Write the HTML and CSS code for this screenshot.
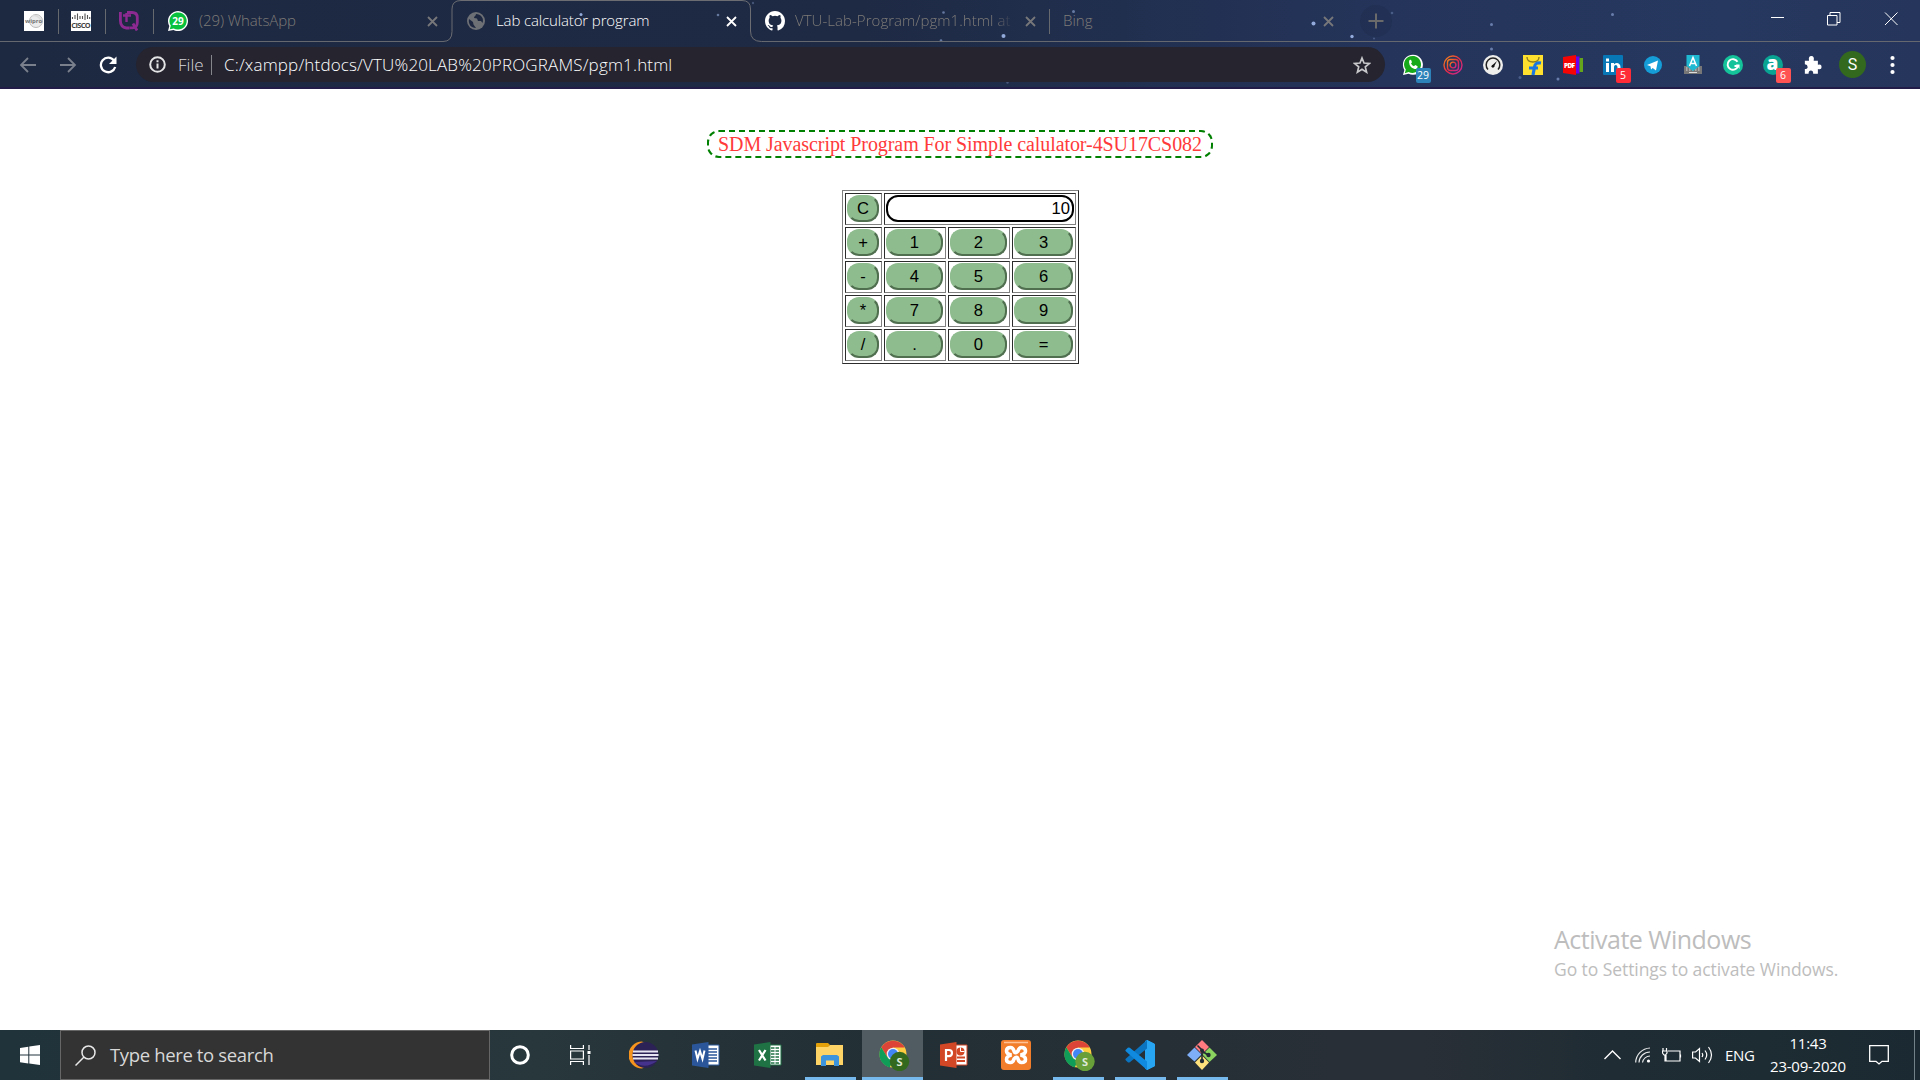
FILE: index.html
```html
<!DOCTYPE html>
<html lang="en">
<head>
<meta charset="utf-8">
<title>Lab calculator program</title>
<link rel="stylesheet" href="styles.css">
</head>
<body>
<div class="screen">
<header class="browser">
  <svg class="stars" width="1920" height="87" fill="#9fb8ea">
    <g opacity=".9"><circle cx="581" cy="14.500" r="1.500"/><circle cx="1003.500" cy="36" r="2"/><circle cx="1313.500" cy="23.500" r="2"/><circle cx="1352" cy="36.500" r="1.700"/></g>
    <g opacity=".55"><circle cx="718" cy="15" r="1.300"/><circle cx="943.500" cy="12.500" r="1.300"/><circle cx="941" cy="40.500" r="1.300"/><circle cx="1073.500" cy="11.500" r="1.500"/><circle cx="1491.500" cy="24.500" r="1.500"/><circle cx="1612.500" cy="14.500" r="1.500"/><circle cx="1491.500" cy="49" r="1.500"/><circle cx="1558" cy="79" r="1.500"/></g>
    <g opacity=".3"><circle cx="753" cy="3" r="1.200"/><circle cx="1392" cy="13" r="1.300"/><circle cx="1374" cy="38.500" r="1"/><circle cx="1520" cy="77.500" r="1.500"/><circle cx="1007.500" cy="82.500" r="1.200"/></g>
  </svg>

  <div class="tabs">
    <div class="tabs-left">
      <svg class="fav" viewBox="0 0 20 20"><rect width="20" height="20" fill="#fff"/><circle cx="12" cy="10" r="6.500" fill="#ececec" stroke="#bbb"/><path d="M8 5a7 7 0 0 1 9 8" fill="none" stroke="#ddd" stroke-width="1.500"/><text x="1" y="12" font-size="6" font-weight="700" fill="#777" font-family="Open Sans">wipro</text></svg>
      <i class="sep"></i>
      <svg class="fav" viewBox="0 0 20 20"><rect width="20" height="20" fill="#fff"/><path d="M1.500 6v2M4 4v4M6.500 2.500v6.500M9 5v3M11.500 5v3M14 2.500v6.500M16.500 4v4M18.700 6v2" stroke="#555" stroke-width="1.100"/><text x=".3" y="17" font-size="7.500" textLength="19.500" font-weight="700" fill="#444" font-family="Open Sans">CISCO</text></svg>
      <i class="sep"></i>
      <svg class="fav tq" viewBox="0 0 20 20" fill="none" stroke="#8d2a92" stroke-width="2.800"><path d="M1.400 1v8.500q0 6.500 6 7.500h3"/><path d="M8 1.500h5q5.300 0 5.300 5v5q0 5-4.800 5.300h-3"/><path d="M14 12.500l4 7"/><path d="M4 4.500h8M7.500 2v9" stroke-width="2.400"/></svg>
      <i class="sep"></i>
      <svg class="fav wa" viewBox="0 0 20 20"><path d="M0 20l1.300-5A10 10 0 1 1 5.500 19z" fill="#fff"/><path d="M1.800 18.300l1-3.700A8.600 8.600 0 1 1 5.700 17.400z" fill="#09c13d"/><text x="10" y="13.800" font-size="10" font-weight="700" fill="#fff" text-anchor="middle" font-family="Open Sans">29</text></svg>
      <span class="tab-title t-wa">(29) WhatsApp</span>
      <svg class="x" viewBox="0 0 11 11"><path d="M1 1l9 9M10 1l-9 9"/></svg>
    </div>
    <div class="tab-active">
      <svg class="outline" width="320" height="42" fill="none" stroke="#6b6d72"><path d="M0 41.500q9 0 9-10V9q0-8.500 9-8.500h281q8.500 0 8.500 8.500v22q0 10.500 11 10.500h2"/></svg>
      <svg class="globe" viewBox="0 0 18 18"><circle cx="9" cy="9" r="9" fill="#6d7075"/><path d="M2 7l4 3 .500 2.500L9 16c-5 0-8-4-7-9zM9 2c0 2-2 2-2 4l3 .500 1 2.500h3l1.500 2c2-5-2-9-6.500-9z" fill="#1e2941"/></svg>
      <span class="tab-title t-lab">Lab calculator program</span>
      <svg class="x bright" viewBox="0 0 11 11"><path d="M1 1l9 9M10 1l-9 9"/></svg>
    </div>
    <div class="tabs-right">
      <svg class="fav gh" viewBox="0 0 16 16"><path fill="#fff" d="M8 0C3.580 0 0 3.580 0 8c0 3.540 2.290 6.530 5.470 7.590.4.070.55-.17.55-.38v-1.490c-2.010.37-2.530-.49-2.690-.94-.09-.23-.48-.94-.82-1.130-.28-.15-.68-.52-.01-.53.63-.01 1.080.58 1.230.82.72 1.210 1.870.87 2.330.66.070-.52.28-.87.51-1.070-1.780-.2-3.640-.89-3.640-3.950 0-.87.31-1.590.82-2.150-.08-.2-.36-1.020.08-2.120 0 0 .67-.21 2.200.82a7.600 7.600 0 0 1 4 0c1.530-1.040 2.200-.82 2.200-.82.44 1.100.16 1.920.08 2.120.51.560.82 1.270.82 2.150 0 3.070-1.870 3.750-3.650 3.950.29.25.54.73.54 1.480v2.200c0 .21.150.46.55.38A8 8 0 0 0 16 8c0-4.420-3.580-8-8-8z"/></svg>
      <span class="tab-title t-vtu">VTU-Lab-Program/pgm1.html at</span>
      <svg class="x" viewBox="0 0 11 11"><path d="M1 1l9 9M10 1l-9 9"/></svg>
      <i class="sep"></i>
      <span class="tab-title t-bing">Bing</span>
      <svg class="x" viewBox="0 0 11 11"><path d="M1 1l9 9M10 1l-9 9"/></svg>
      <span class="newtab"><svg width="16" height="16" stroke="#6a6a6a" stroke-width="2"><path d="M8 .500v15M.500 8h15"/></svg></span>
      <svg class="winctl" width="130" height="14" fill="none" stroke="#fff"><path d="M0 5.500h13"/><path d="M56.500 3.500h9.500v9.500h-9.500zM59 3.500V.500h10v10h-3"/><path d="M114 .500l12.500 12.500M126.500 .500L114 13"/></svg>
    </div>
  </div>

  <div class="toolbar">
    <div class="nav">
      <svg width="18" height="18" fill="none" stroke="#7a808c" stroke-width="1.800"><path d="M17 9H2M9 2L2 9l7 7"/></svg>
      <svg width="18" height="18" fill="none" stroke="#7a808c" stroke-width="1.800"><path d="M1 9h15M9 2l7 7-7 7"/></svg>
      <svg width="18" height="18" fill="none" stroke="#fff" stroke-width="2.300"><path d="M15 4.500A7.300 7.300 0 1 0 16.200 11"/><path d="M17.500 .500V8H10z" fill="#fff" stroke="none"/></svg>
    </div>
    <div class="omnibox">
      <svg width="17" height="17" fill="none" stroke="#e4e4e6" stroke-width="2"><circle cx="8.500" cy="8.500" r="7.300"/><path d="M8.500 7.500v5M8.500 4.200v2"/></svg>
      <span class="file">File</span><i class="bar"></i><span class="url">C:/xampp/htdocs/VTU%20LAB%20PROGRAMS/pgm1.html</span>
      <svg class="star" width="18" height="18" fill="none" stroke="#c8c8cb" stroke-width="1.700"><path d="M9 2l2 5 5.400.400-4.100 3.500 1.300 5.300L9 13.300l-4.600 2.900 1.300-5.300L1.600 7.400 7 7z"/></svg>
    </div>
    <div class="exts">
      <span class="ext"><svg viewBox="0 0 20 20"><path d="M0 20l1.400-5A10 10 0 1 1 5.500 18.700z" fill="#fff"/><path d="M1.800 18.200l1-3.600A8.500 8.500 0 1 1 5.700 17z" fill="#18a91b"/><path d="M6.500 5l1.500-.200 1 2.500-1 1.200q1 2 3 2.800l1.200-1.200 2.400 1.100q0 3-3 2.800Q6.500 12.500 6 7z" fill="#fff"/></svg><b class="badge blue">29</b></span>
      <span class="ext"><svg viewBox="0 0 20 20" fill="none" stroke-width="1.400"><defs><linearGradient id="ig" x2="1" y2="1"><stop stop-color="#f58a15"/><stop offset=".5" stop-color="#e32b48"/><stop offset="1" stop-color="#c4269a"/></linearGradient></defs><g stroke="url(#ig)"><circle cx="10" cy="10" r="9"/><rect x="4.500" y="4.500" width="11" height="11" rx="3"/><circle cx="10" cy="10" r="2.900"/></g></svg></span>
      <span class="ext"><svg viewBox="0 0 20 20"><circle cx="10" cy="10" r="10" fill="#eeeeec"/><path d="M5 14.500A6.800 6.800 0 1 1 15 14.500" fill="none" stroke="#222" stroke-width="1.500"/><path d="M14 6l-3.200 6-1.900-1.500z" fill="#111"/><circle cx="9.900" cy="11.300" r="1.400" fill="#111"/></svg></span>
      <span class="ext"><svg viewBox="0 0 20 20"><rect width="20" height="20" fill="#ffe02f"/><path d="M4 2q0 5 6 5t6-5" fill="none" stroke="#8c7b20" stroke-width="1.300"/><path d="M18 8q-6-1-6.500 4L10 20M6 13h9" fill="none" stroke="#1976e0" stroke-width="3.200"/></svg></span>
      <span class="ext"><svg viewBox="0 0 20 20"><path d="M0 2l13-2v20L0 18z" fill="#f60505"/><rect x="13" y="1.500" width="3.500" height="17" fill="#6900f0"/><rect x="16.500" y="3" width="3.500" height="14" fill="#65a51b"/><text x="1" y="12.500" font-size="6.500" textLength="11" font-weight="800" fill="#fff" font-family="Open Sans">PDF</text></svg></span>
      <span class="ext"><svg viewBox="0 0 20 20"><rect width="20" height="20" rx="1" fill="#0877b5"/><path d="M3 8h3v9H3zM3 3.500h3v3H3zM8 8h3v1.300q3-2.500 5.500 0 1 1 1 3V17h-3v-5q-.200-2-1.800-2T11 12v5H8z" fill="#fff"/></svg><b class="badge red">5</b></span>
      <span class="ext"><svg viewBox="0 0 20 20"><circle cx="10" cy="10" r="9" fill="#159dd8"/><path d="M4 10l11-4.500-2 10-3.300-2.600L8 14.500l-.500-3.300z" fill="#fff"/></svg></span>
      <span class="ext"><svg viewBox="0 0 20 20"><path d="M1 11h18v8H1z" fill="#777"/><path d="M3 13h14M3 15h14" stroke="#ddd" stroke-dasharray="1.500 1.500"/><path d="M6 17.500h8" stroke="#ddd"/><path d="M3.500 0h13v11L10 16l-6.500-5z" fill="#1fb9d2"/><path d="M6.500 11L10 2.500l3.500 8.500M8 8.500h4" fill="none" stroke="#fff" stroke-width="1.500"/></svg></span>
      <span class="ext"><svg viewBox="0 0 20 20"><circle cx="10" cy="10" r="10" fill="#15c39a"/><path d="M14.500 6.800A5.300 5.300 0 1 0 15 11h-3.500" fill="none" stroke="#fff" stroke-width="1.900"/><path d="M13 9.500h3.500V14z" fill="#fff"/></svg></span>
      <span class="ext"><svg viewBox="0 0 20 20"><circle cx="10" cy="10" r="10" fill="#0aa493"/><text x="9.500" y="15" font-size="19" font-weight="800" text-anchor="middle" fill="#fff" font-family="Open Sans">a</text></svg><b class="badge pink">6</b></span>
      <span class="ext"><svg viewBox="0 0 20 20"><path d="M2 5h4.500Q5.500 0 9 0t2.500 5H16v4.500q4-1 4 2.300t-4 2.300V19h-5q0-3.500-2.500-3.500T6 19H2v-5q3 0 3-2.300T2 9z" fill="#fff" transform="translate(0 1) scale(.93)"/></svg></span>
    </div>
    <span class="avatar">S</span>
    <svg class="dots" width="5" height="20" fill="#fff"><circle cx="2.500" cy="3" r="2.100"/><circle cx="2.500" cy="10" r="2.100"/><circle cx="2.500" cy="17" r="2.100"/></svg>
  </div>
</header>

<main class="page">
  <h1 class="heading">SDM Javascript Program For Simple calulator-4SU17CS082</h1>
  <table class="calc">
    <colgroup><col class="c-op"><col class="c-num"><col class="c-num"><col class="c-last"></colgroup>
    <tr><td><button>C</button></td><td colspan="3"><div class="display">10</div></td></tr>
    <tr><td><button>+</button></td><td><button>1</button></td><td><button>2</button></td><td><button>3</button></td></tr>
    <tr><td><button>-</button></td><td><button>4</button></td><td><button>5</button></td><td><button>6</button></td></tr>
    <tr><td><button>*</button></td><td><button>7</button></td><td><button>8</button></td><td><button>9</button></td></tr>
    <tr><td><button>/</button></td><td><button>.</button></td><td><button>0</button></td><td><button>=</button></td></tr>
  </table>
  <div class="activate"><p class="act-title">Activate Windows</p><p class="act-sub">Go to Settings to activate Windows.</p></div>
</main>

<footer class="taskbar">
  <span class="start"><svg width="20" height="20" fill="#fff"><path d="M0 3l8.300-1.200V9.500H0zM9.300 1.600L20 0v9.500H9.300zM0 10.500h8.300v8L0 17.300zM9.300 10.500H20V20L9.300 18.600z"/></svg></span>
  <div class="search"><svg width="21" height="21" fill="none" stroke="#e8e8e8" stroke-width="1.500"><circle cx="13.500" cy="7.500" r="6.500"/><path d="M9 12L.500 20.500"/></svg><span>Type here to search</span></div>
  <span class="task sys"><svg width="20" height="20" fill="none" stroke="#fff" stroke-width="3"><circle cx="10" cy="10" r="8.300"/></svg></span>
  <span class="task sys view"><svg width="21" height="20" fill="none" stroke="#fff" stroke-width="1.200"><path d="M.600 0v3.500h12.800V0M.600 20v-3.500h12.800V20M.600 6h12.800v8H.600zM19 0v5M19 10v10"/><path d="M17.500 6h3v3h-3z" fill="#fff" stroke="none"/></svg></span>
  <span class="task"><svg width="30" height="30"><path d="M13 1.500A13.500 13.500 0 0 0 13 28.500L16 27A13 13 0 0 1 16 3z" fill="#f7941e"/><circle cx="16.500" cy="15" r="13" fill="#2c2255"/><path d="M5 22Q16 30 28 21z" fill="#45328c"/><path d="M4 11.500h25M3.500 15h26M4 18.500h25" stroke="#e9e6f3" stroke-width="1.800"/></svg></span>
  <span class="task"><svg width="28" height="28"><path d="M14 4h13v20H14z" fill="#fff" stroke="#2b579a"/><path d="M16 8h9M16 11h9M16 14h9M16 17h9M16 20h9" stroke="#2b579a" stroke-width="1.500"/><path d="M0 3.500L16.500 1v26L0 24.500z" fill="#2b579a"/><path d="M3.500 9.500L5.500 18 8 10l2.500 8 2-8.500" fill="none" stroke="#fff" stroke-width="2"/></svg></span>
  <span class="task"><svg width="28" height="28"><path d="M14 4h13v20H14z" fill="#fff" stroke="#217346"/><path d="M17 7h8M17 10h8M17 13h8M17 16h8M17 19h8M17 22h8" stroke="#217346" stroke-width="1.700" stroke-dasharray="3.500 1"/><path d="M0 3.500L16.500 1v26L0 24.500z" fill="#1e7244"/><path d="M5 9l6.500 10.500M11.500 9L5 19.500" fill="none" stroke="#fff" stroke-width="2.200"/></svg></span>
  <span class="task open"><svg width="28" height="28"><path d="M0 3q0-1 1-1h11l2 2-2 3H0z" fill="#e3a008"/><path d="M0 6h12l2-2h13v20H0z" fill="#ffd466"/><path d="M5 25V15.500l2-1.500h14l2 1.500V25h-5v-5.500H10V25z" fill="#3b94dc"/></svg></span>
  <span class="task open active"><svg width="32" height="32"><use href="#chrome"/><circle cx="21.500" cy="22.500" r="9.700" fill="#33691e"/><text class="mini" x="21.500" y="26.500">S</text></svg></span>
  <span class="task"><svg width="28" height="28"><path d="M14 4h13v20H14z" fill="#fff" stroke="#d24726"/><path d="M17 16.500h8M17 20h8" stroke="#d24726" stroke-width="1.800"/><circle cx="20.500" cy="10.500" r="4" fill="#d24726"/><path d="M20.500 10.500V6.500M20.500 10.500h4" stroke="#fff"/><path d="M0 3.500L16.500 1v26L0 24.500z" fill="#d24726"/><path d="M6 20V9h3q3 0 3 3t-3 3.200H6" fill="none" stroke="#fff" stroke-width="2.200"/></svg></span>
  <span class="task"><svg width="30" height="30"><rect width="30" height="30" rx="3" fill="#f27e2c"/><path d="M3 2.500h24" stroke="#ffc294" stroke-width="1.500"/><path d="M10.500 15Q5.500 14 5.500 11q0-3.500 4-3.500Q12 7.500 13 11t4 0q1-3.500 3.500-3.500 4 0 4 3.500 0 3-5 4 5 1 5 4.500 0 3-4 3-2.500 0-3.500-3.500t-4 0q-1 3.500-3.500 3.500-4 0-4-3Q5.500 16 10.500 15z" fill="none" stroke="#fff" stroke-width="3.600"/></svg></span>
  <span class="task open profile"><svg width="32" height="32"><defs><g id="chrome"><circle cx="15" cy="15" r="13.500" fill="#ffcd40"/><path d="M3.300 8.300A13.500 13.500 0 0 1 26.700 8.500H15l-5.600 9.700z" fill="#db4437"/><path d="M3.300 8.300L9.400 18.200l5.600 3-3.300 7.200A13.500 13.500 0 0 1 3.300 8.300z" fill="#0f9d58"/><circle cx="15" cy="15" r="6.300" fill="#f1f1f1"/><circle cx="15" cy="15" r="5" fill="#4285f4"/></g></defs><use href="#chrome"/><circle cx="22" cy="22.500" r="9.700" fill="#689f38"/><text class="mini" x="22" y="26.500">S</text></svg></span>
  <span class="task open"><svg width="30" height="30"><path d="M22 0l7 3.500q1 .500 1 1.500v20q0 1-1 1.500L22 30l-2-1.500V1z" fill="#27a5f2"/><path d="M22 0L1 18.500q-1.200 1 0 2l1.800 1.700q1 .700 2 0L22 8.500z" fill="#0a74c0"/><path d="M22 30L1 11.500q-1.200-1 0-2l1.800-1.700q1-.700 2 0L22 21.500z" fill="#0f8ade"/><path d="M22 0l7 3.500q1 .500 1 1.500v20q0 1-1 1.500L22 30z" fill="#27a5f2"/></svg></span>
  <span class="task open"><svg width="30" height="30"><path d="M15 0l7 7-7 7-7-7z" fill="#ff7b80"/><path d="M7.500 7.500l7 7-7 7L0 15z" fill="#7eaef8"/><path d="M22.500 7.500L30 15l-7.500 7-7-7.500z" fill="#8bd45f"/><path d="M15 15.500l7 7-7 7.500-7-7.500z" fill="#ffe27c"/><path d="M10.500 5.500l4.500 4.500v12M15 11l6 4" fill="none" stroke="#222b33" stroke-width="1.600"/><circle cx="15" cy="10.500" r="2" fill="#222b33"/><circle cx="15" cy="21" r="2.200" fill="#222b33"/><circle cx="21.500" cy="15" r="2.200" fill="#222b33"/></svg></span>
  <div class="tray">
    <svg width="17" height="10" fill="none" stroke="#fff" stroke-width="1.400"><path d="M.500 9L8.500 1l8 8"/></svg>
    <svg class="wifi" width="16" height="16" fill="none" stroke="#e6e8e9" stroke-width="1.200"><path d="M.700 15.500A15 15 0 0 1 15 1M4 15.500A11 11 0 0 1 15 5M7.500 15.500A8 8 0 0 1 15 9"/><circle cx="13.500" cy="14" r="1.600" fill="#fff" stroke="none"/></svg>
    <svg class="batt" width="20" height="15" fill="none" stroke="#fff" stroke-width="1.200"><path d="M6 3h12v10H4V7M18.500 6.500v3M1 0v3M4.500 0v3M.500 3h4.500v2L3.500 7H2L.500 5zM3 7v6h2"/></svg>
    <svg class="sound" width="21" height="18" fill="none" stroke="#fff" stroke-width="1.200"><path d="M.600 6h3L7.500 2.500v13L3.500 12H.600zM10 7q1.500 2 0 4M13 4.500q3.500 4.500 0 9M16.500 1q6 8 0 16"/></svg>
    <span class="eng">ENG</span>
    <div class="clock"><span class="time">11:43</span><span class="date">23-09-2020</span></div>
    <svg class="note" width="20" height="20" fill="none" stroke="#fff" stroke-width="1.300"><path d="M.700.700h18.600v15.600H13L10 19l-3-2.700H.700z"/></svg>
    <i class="peek"></i>
  </div>
</footer>
</div>
</body>
</html>
```
FILE: styles.css
```css
* { box-sizing: border-box; }
body { margin: 0; background: #fff; font-family: "Open Sans", "Noto Sans", sans-serif; }
svg { display: block; flex: none; }
.screen { width: 1920px; height: 1080px; display: flex; flex-direction: column; overflow: hidden; }

/* Browser frame */
.browser { position: relative; height: 89px; flex: none; background: linear-gradient(90deg, #1d2841 0%, #1e2a44 45%, #24345a 72%, #273860 90%, #25355b 100%); border-bottom: 2px solid #211d48; }
.stars { position: absolute; left: 0; top: 0; }
.tabs { position: relative; display: flex; height: 42px; }
.tabs-left, .tabs-right { display: flex; align-items: center; border-bottom: 1px solid #65686e; padding-top: 1px; }
.tabs-left { width: 443px; padding-left: 24px; }
.tabs-right { flex: 1; padding-left: 3px; }
.fav { width: 20px; height: 20px; }
.sep { flex: none; width: 1px; height: 25px; background: #66696e; margin: 0 12px 0 14px; }
.tq { margin-left: 1px; }
.wa { margin-left: 2px; }
.tab-title { font-size: 15px; font-weight: 300; line-height: 20px; margin-bottom: 2px; white-space: nowrap; color: #7f7c78; overflow: hidden; }
.x { width: 11px; height: 11px; fill: none; stroke: #77777a; stroke-width: 1.8; }
.x.bright { stroke: #fff; }
.t-wa { width: 228px; margin-left: 11px; letter-spacing: -0.1px; }
.tab-active { position: relative; display: flex; align-items: center; width: 319px; padding-left: 24px; }
.outline { position: absolute; left: 0; top: 0; }
.globe { width: 18px; height: 18px; }
.t-lab { width: 230px; margin-left: 11px; color: #fff; letter-spacing: -0.13px; }
.t-vtu { width: 219px; margin-right: 11px; margin-left: 10px; letter-spacing: 0.04px; -webkit-mask-image: linear-gradient(90deg, #000 91%, transparent); mask-image: linear-gradient(90deg, #000 91%, transparent); }
.tabs-right .sep { margin: 0 13px 0 13px; }
.t-bing { width: 260px; }
.newtab { display: flex; align-items: center; justify-content: center; width: 32px; height: 32px; margin-left: 26px; border-radius: 50%; background: rgba(20, 28, 50, .14); }
.winctl { margin-left: 379px; margin-bottom: 4px; }

.toolbar { position: relative; display: flex; align-items: center; height: 45px; }
.nav { display: flex; gap: 22px; width: 136px; padding-left: 19px; }
.omnibox { display: flex; align-items: center; width: 1249px; height: 35px; border-radius: 18px; background: #25242f; padding-left: 13px; font-size: 17px; font-weight: 300; line-height: 24px; color: #fff; white-space: nowrap; }
.file { width: 33px; margin-left: 12px; color: #d8d8dc; }
.bar { width: 1px; height: 20px; background: #85858c; }
.url { flex: 1; margin-left: 12px; letter-spacing: 0.16px; }
.star { margin-right: 14px; }
.exts { display: flex; gap: 20px; margin-left: 17.500px; }
.ext { position: relative; width: 20px; height: 20px; }
.ext > svg { width: 20px; height: 20px; overflow: visible; }
.badge { position: absolute; left: 13px; top: 13px; min-width: 15px; height: 15px; border-radius: 2px; font-size: 10.500px; font-weight: 400; line-height: 15px; text-align: center; color: #fff; }
.blue { background: #2d83b9; }
.red { background: #ff2c37; }
.pink { background: #ff5252; }
.avatar { width: 27px; height: 27px; margin-left: 16.500px; border-radius: 50%; background: #33691e; color: #fff; font: 400 16px/27px Roboto, sans-serif; text-align: center; }
.dots { margin-left: 24px; }

/* Calculator page */
.page { position: relative; flex: 1; display: flex; flex-direction: column; align-items: center; padding-top: 41px; }
.heading { margin: 0; width: 506px; height: 28px; border: 2px dashed green; border-radius: 12px; font: 400 20px/24px "Liberation Serif", serif; letter-spacing: -0.075px; color: #ff3a3a; text-align: center; white-space: nowrap; }
.calc { margin-top: 32px; margin-left: 1px; width: 237px; table-layout: fixed; border-collapse: separate; border-spacing: 2px; border: 1px solid; border-color: #808080 #2c2c2c #2c2c2c #808080; }
.c-op { width: 37px; }
.c-num { width: 62px; }
.c-last { width: 64px; }
.calc td { height: 32px; padding: 1px; border: 1px solid; border-color: #2c2c2c #808080 #808080 #2c2c2c; vertical-align: top; }
.calc button { display: block; width: calc(100% - 1px); height: 27px; padding: 0; border: 2px solid; border-color: #8fbc8f #4f6f4f #4f6f4f #8fbc8f; border-radius: 12px; background: #8fbc8f; color: #000; font: 16.600px/23px "Liberation Sans", Arial, sans-serif; }
.display { width: 188px; height: 27px; border: 2px solid #000; border-radius: 12px; padding-right: 2px; font: 16.600px/23px "Liberation Sans", Arial, sans-serif; text-align: right; }
.activate { position: absolute; left: 1554px; top: 832px; color: #bdbdbd; white-space: nowrap; }
.activate p { margin: 0; }
.act-title { font-size: 25px; line-height: 36px; letter-spacing: -0.5px; }
.act-sub { font-size: 17.500px; line-height: 24px; letter-spacing: -0.07px; }

/* Taskbar */
.taskbar { display: flex; height: 50px; flex: none; background: linear-gradient(90deg, #20323a 0%, #28373c 28%, #222f35 46%, #262f36 60%, #292f37 74%, #1f2c33 84%, #1b2a32 100%); color: #fff; }
.start { display: flex; align-items: center; justify-content: center; width: 60px; }
.search { display: flex; align-items: center; width: 430px; border: 1px solid #666; background: #333; padding-left: 14px; gap: 14px; color: #d8d8d8; font-size: 18.500px; letter-spacing: -0.36px; }
.search span { margin-bottom: 2px; }
.task { display: flex; align-items: center; justify-content: center; width: 62px; border-bottom: 3px solid transparent; padding-top: 3px; background-clip: padding-box; }
.task.sys { width: 60px; }
.task.view { margin-right: 3px; }
.open { background: linear-gradient(#76b9ed, #76b9ed) center bottom / 51px 3px no-repeat border-box; }
.active { width: 61px; margin-left: 1px; padding-left: 3px; background: linear-gradient(#76b9ed, #76b9ed) center bottom / 61px 3px no-repeat border-box, #505b62; }
.profile { padding-left: 2px; }
.mini { font: 700 11px "Open Sans", sans-serif; fill: #dfe8d8; text-anchor: middle; }
.tray { display: flex; align-items: center; margin-left: auto; width: 316px; font-size: 15px; }
.wifi { margin-left: 14px; }
.batt { margin-left: 11px; }
.sound { margin-left: 10px; }
.eng { width: 29px; margin-left: 12px; letter-spacing: -0.3px; }
.clock { display: flex; flex-direction: column; align-items: center; width: 78px; margin-left: 15px; line-height: 23px; white-space: nowrap; letter-spacing: -0.25px; }
.note { margin-left: 22px; }
.peek { width: 1px; height: 50px; margin-left: 25px; background: #728087; }
```
